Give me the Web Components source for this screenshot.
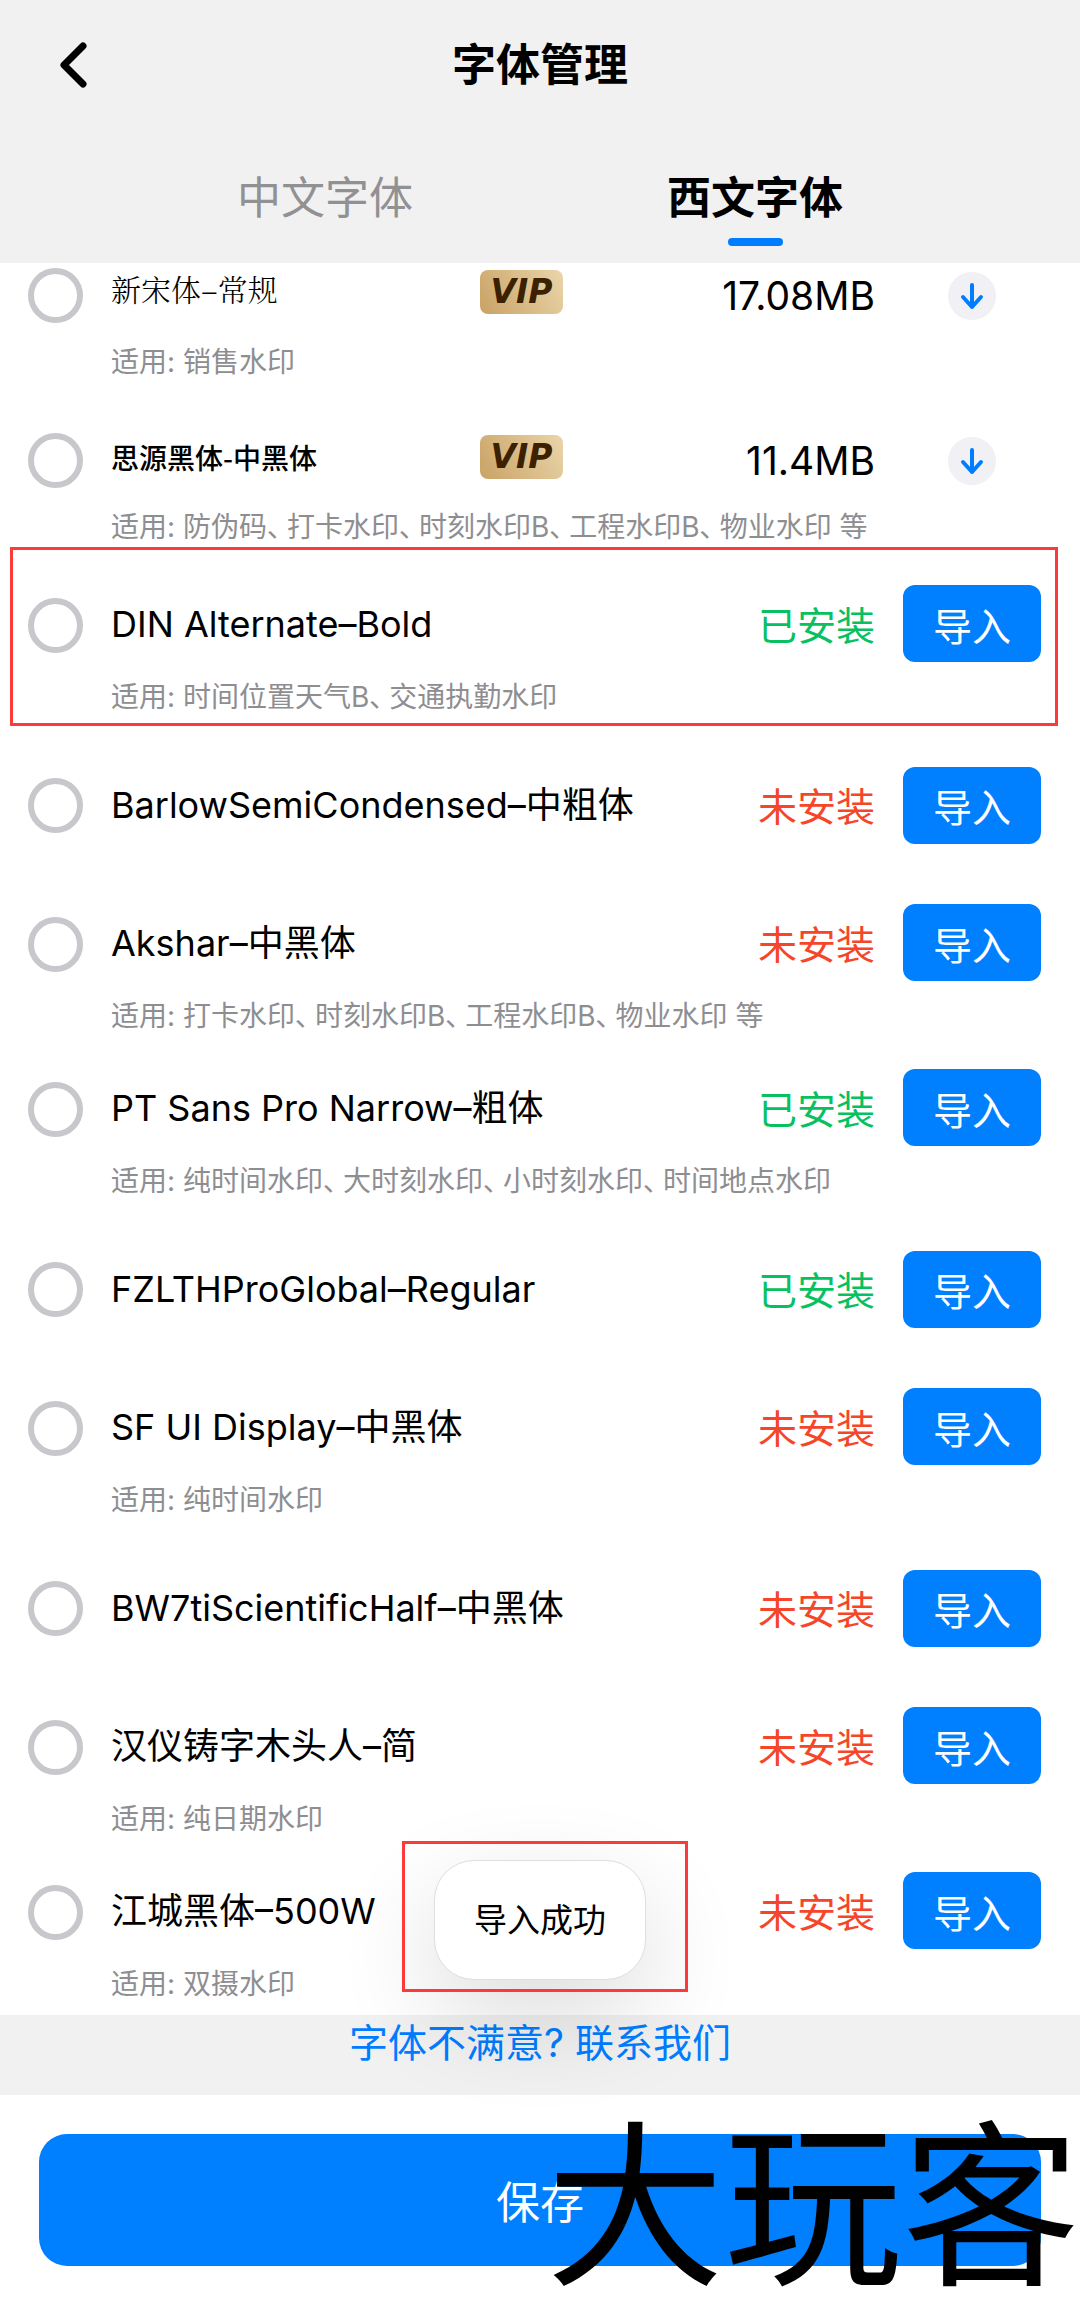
<!DOCTYPE html>
<html lang="zh-CN">
<head>
<meta charset="utf-8">
<meta name="viewport" content="width=device-width, initial-scale=1">
<title>字体管理</title>
<style>
  html, body {
    margin: 0;
    height: 100%;
  }
  body {
    font-family: Inter, "Noto Sans CJK SC", sans-serif;
    color: #000;
    background: #fff;
  }
</style>
</head>
<body>
<font-manager>
  <font-header slot="header">字体管理</font-header>
  <font-tabs slot="header">
    <font-tab>中文字体</font-tab>
    <font-tab active>西文字体</font-tab>
  </font-tabs>

  <font-row kind="song" size="17.08MB" usage="适用: 销售水印">新宋体–常规</font-row>
  <font-row kind="hei" size="11.4MB" usage="适用: 防伪码、打卡水印、时刻水印B、工程水印B、物业水印 等">思源黑体-中黑体</font-row>
  <font-row installed marked usage="适用: 时间位置天气B、交通执勤水印">DIN Alternate–Bold</font-row>
  <font-row plain>BarlowSemiCondensed–中粗体</font-row>
  <font-row usage="适用: 打卡水印、时刻水印B、工程水印B、物业水印 等">Akshar–中黑体</font-row>
  <font-row installed usage="适用: 纯时间水印、大时刻水印、小时刻水印、时间地点水印">PT Sans Pro Narrow–粗体</font-row>
  <font-row installed plain>FZLTHProGlobal–Regular</font-row>
  <font-row usage="适用: 纯时间水印">SF UI Display–中黑体</font-row>
  <font-row plain>BW7tiScientificHalf–中黑体</font-row>
  <font-row usage="适用: 纯日期水印">汉仪铸字木头人–简</font-row>
  <font-row usage="适用: 双摄水印">江城黑体–500W</font-row>

  <font-footer slot="footer">
    <span slot="contact">字体不满意? 联系我们</span>
    <span slot="save">保存</span>
  </font-footer>
  <font-toast slot="overlay">导入成功</font-toast>
  <site-mark slot="overlay">大玩客</site-mark>
</font-manager>

<script>
window.customElements.define('font-manager', class extends HTMLElement {
  constructor() {
    super();
    const root = this.attachShadow({ mode: 'open' });
    root.innerHTML = `
    <style>
      :host {
        position: relative;
        display: flex;
        flex-direction: column;
        height: 100vh;
        overflow: hidden;
      }
      /* the list is scrolled to its end */
      main {
        flex: 1;
        min-height: 0;
        display: flex;
        flex-direction: column;
        justify-content: flex-end;
        overflow: hidden;
      }
    </style>
    <slot name="header"></slot>
    <main><slot></slot></main>
    <slot name="footer"></slot>
    <slot name="overlay"></slot>
    `;
  }
});

window.customElements.define('font-header', class extends HTMLElement {
  constructor() {
    super();
    const root = this.attachShadow({ mode: 'open' });
    root.innerHTML = `
    <style>
      :host {
        display: grid;
        grid-template-columns: 60px 1fr 60px;
        align-items: center;
        height: 130px;
        padding: 0 44px;
        background: #f1f1f1;
      }
      button {
        width: 60px;
        height: 60px;
        padding: 0;
        border: 0;
        background: none;
      }
      svg { display: block; }
      h1 {
        margin: 0;
        font-size: 44px;
        font-weight: 700;
        line-height: 60px;
        text-align: center;
      }
    </style>
    <button aria-label="返回">
      <svg width="60" height="60" viewBox="0 0 60 60" fill="none" stroke="#000" stroke-width="7" stroke-linecap="round" stroke-linejoin="round">
        <path d="M39 11 L20 30 L39 49"/>
      </svg>
    </button>
    <h1><slot></slot></h1>
    `;
  }
});

window.customElements.define('font-tabs', class extends HTMLElement {
  constructor() {
    super();
    const root = this.attachShadow({ mode: 'open' });
    root.innerHTML = `
    <style>
      :host {
        display: block;
        padding: 38px 110px 17px;
        background: #f1f1f1;
      }
      nav { display: flex; }
      ::slotted(font-tab) { flex: 1; }
    </style>
    <nav><slot></slot></nav>
    `;
  }
});

window.customElements.define('font-tab', class extends HTMLElement {
  constructor() {
    super();
    const root = this.attachShadow({ mode: 'open' });
    root.innerHTML = `
    <style>
      :host {
        display: flex;
        justify-content: center;
        color: #919194;
      }
      :host([active]) {
        color: #000;
        --bar: #007dff;
        --weight: 700;
      }
      button {
        display: flex;
        flex-direction: column;
        align-items: center;
        gap: 10px;
        padding: 0;
        border: 0;
        background: none;
        color: inherit;
        font-family: inherit;
        font-size: 44px;
        font-weight: var(--weight, 400);
        line-height: 60px;
      }
      i {
        width: 55px;
        height: 8px;
        border-radius: 4px;
        background: var(--bar, transparent);
      }
    </style>
    <button><slot></slot><i></i></button>
    `;
  }
});

window.customElements.define('vip-badge', class extends HTMLElement {
  constructor() {
    super();
    const root = this.attachShadow({ mode: 'open' });
    root.innerHTML = `
    <style>
      :host {
        display: block;
        width: 83px;
        height: 44px;
        border-radius: 8px;
        background: linear-gradient(60deg, #c9a265, #ead5aa);
        color: #3b2100;
        font-family: "DejaVu Sans", Inter, sans-serif;
        font-size: 33px;
        font-weight: 700;
        font-style: italic;
        line-height: 44px;
        text-align: center;
      }
    </style>
    VIP
    `;
  }
});

window.customElements.define('font-row', class extends HTMLElement {
  connectedCallback() {
    const size = this.getAttribute('size');
    const installed = this.hasAttribute('installed');
    const usage = (this.getAttribute('usage') || '').split('、');

    const status = size || (installed ? '已安装' : '未安装');
    const action = size ? `
      <button class="download" aria-label="下载">
        <svg width="48" height="48" viewBox="0 0 48 48" fill="none" stroke="#007dff" stroke-width="4" stroke-linecap="round" stroke-linejoin="round">
          <path d="M24 13 V35 M15 25 L24 35 L33 25"/>
        </svg>
      </button>` : '<button class="import">导入</button>';

    const root = this.attachShadow({ mode: 'open' });
    root.innerHTML = `
    <style>
      :host {
        position: relative;
        flex: none;
        display: grid;
        grid-template-columns: 55px 1fr auto 138px;
        grid-template-rows: 121px 44px;
        column-gap: 28px;
        align-items: center;
        padding: 0 39px 0 28px;
      }
      :host([plain]) { grid-template-rows: 154px; }
      :host([marked])::after {
        content: "";
        position: absolute;
        inset: -16px 22px 2px 10px;
        border: 3px solid #fb3a3a;
        pointer-events: none;
      }
      input {
        appearance: none;
        width: 55px;
        height: 55px;
        margin: 4px 0 0;
        border: 6px solid #c7c7cc;
        border-radius: 50%;
        background: #fff;
      }
      :host([plain]) input { margin: 0; }
      .name {
        display: flex;
        align-items: center;
        font-size: 36px;
        line-height: 44px;
        white-space: nowrap;
      }
      label { min-width: 369px; }
      :host([kind=song]) label {
        font-family: "Noto Serif CJK SC", "Noto Sans CJK SC", serif;
        font-size: 30px;
        font-weight: 300;
        line-height: 36px;
        padding-bottom: 8px;
      }
      :host([kind=hei]) label {
        font-family: "Noto Sans CJK SC", sans-serif;
        font-size: 28px;
        font-weight: 500;
      }
      :host([kind]) .name { margin-bottom: 4px; }
      .status {
        padding-top: 4px;
        color: ${size ? '#000' : installed ? '#07c160' : '#f5462a'};
        font-size: 39px;
        line-height: 48px;
        text-align: right;
      }
      button {
        justify-self: center;
        padding: 0;
        border: 0;
        font-family: inherit;
      }
      .import {
        width: 138px;
        height: 77px;
        border-radius: 12px;
        background: #007fff;
        color: #fff;
        font-size: 39px;
      }
      .download {
        width: 48px;
        height: 48px;
        margin-top: 4px;
        border-radius: 50%;
        background: #f0f0f5;
      }
      svg { display: block; }
      .usage {
        grid-column: 2 / -1;
        align-self: start;
        display: flex;
        gap: 6px;
        color: #8e8e91;
        font-size: 28px;
        line-height: 26px;
        white-space: nowrap;
        font-feature-settings: "palt";
      }
      :host([kind]) .usage { line-height: 16px; }
      :host([plain]) .usage { display: none; }
    </style>
    <input type="radio" id="pick">
    <div class="name">
      <label for="pick"><slot></slot></label>
      ${size ? '<vip-badge></vip-badge>' : ''}
    </div>
    <span class="status">${status}</span>
    ${action}
    <div class="usage">${usage.map((item, i) => `<span>${item}${i < usage.length - 1 ? '、' : ''}</span>`).join('')}</div>
    `;
  }
});

window.customElements.define('font-footer', class extends HTMLElement {
  constructor() {
    super();
    const root = this.attachShadow({ mode: 'open' });
    root.innerHTML = `
    <style>
      :host { display: block; }
      .contact {
        height: 80px;
        background: #f1f1f1;
        text-align: center;
      }
      a {
        color: #007dff;
        font-size: 39px;
        line-height: 56px;
        text-decoration: none;
      }
      .save { padding: 39px 39px 38px; }
      button {
        display: block;
        width: 100%;
        height: 132px;
        border: 0;
        border-radius: 28px;
        background: #007fff;
        color: #fff;
        font-family: inherit;
        font-size: 44px;
      }
    </style>
    <div class="contact"><a href="#"><slot name="contact"></slot></a></div>
    <div class="save"><button><slot name="save"></slot></button></div>
    `;
  }
});

window.customElements.define('font-toast', class extends HTMLElement {
  constructor() {
    super();
    const root = this.attachShadow({ mode: 'open' });
    root.innerHTML = `
    <style>
      :host {
        position: absolute;
        left: 50%;
        bottom: 324px;
        transform: translateX(-50%);
        box-sizing: border-box;
        padding: 0 39px;
        border: 1px solid #dedede;
        border-radius: 40px;
        background: #fff;
        box-shadow: 0 36px 100px rgba(0, 0, 0, 0.14);
        font-size: 33px;
        line-height: 118px;
        white-space: nowrap;
      }
      :host::after {
        content: "";
        position: absolute;
        inset: -20px -43px -13px -33px;
        border: 3px solid #fb3a3a;
      }
    </style>
    <slot></slot>
    `;
  }
});

window.customElements.define('site-mark', class extends HTMLElement {
  constructor() {
    super();
    const root = this.attachShadow({ mode: 'open' });
    root.innerHTML = `
    <style>
      :host {
        position: absolute;
        right: 0;
        bottom: 0;
        color: #000;
        font-size: 178px;
        font-weight: 400;
        line-height: 192px;
        pointer-events: none;
      }
    </style>
    <slot></slot>
    `;
  }
});
</script>
</body>
</html>
